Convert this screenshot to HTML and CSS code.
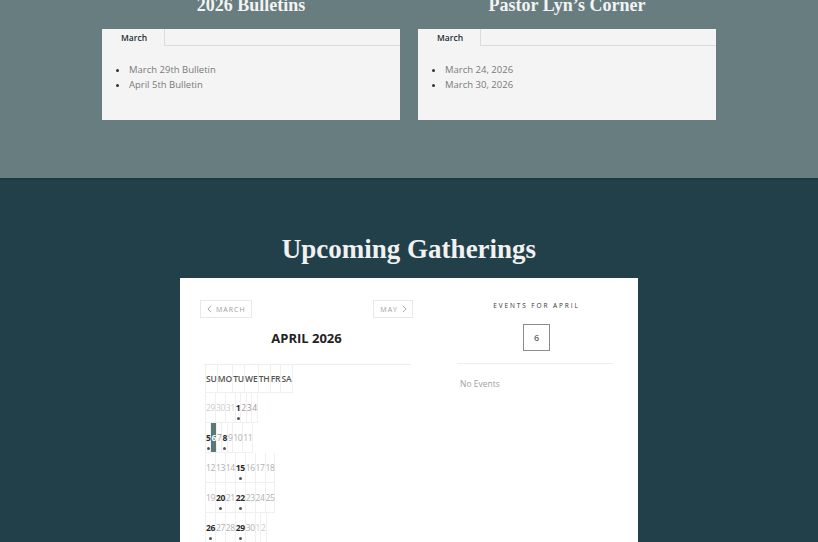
FILE: index.html
```html
<!DOCTYPE html>
<html lang="en">
<head>
<meta charset="utf-8">
<title>Bulletins &amp; Gatherings</title>
<link rel="stylesheet" href="styles.css">
</head>
<body>
  <section class="feeds">
    <div class="feed-grid">
      <div class="feed">
        <h2 class="feed-title">2026 Bulletins</h2>
        <div class="tabs-card">
          <div class="tab-bar">
            <span class="tab is-active">March</span>
            <span class="tab-fill"></span>
          </div>
          <ul class="feed-list">
            <li>March 29th Bulletin</li>
            <li>April 5th Bulletin</li>
          </ul>
        </div>
      </div>
      <div class="feed">
        <h2 class="feed-title">Pastor Lyn’s Corner</h2>
        <div class="tabs-card">
          <div class="tab-bar">
            <span class="tab is-active">March</span>
            <span class="tab-fill"></span>
          </div>
          <ul class="feed-list">
            <li>March 24, 2026</li>
            <li>March 30, 2026</li>
          </ul>
        </div>
      </div>
    </div>
  </section>

  <section class="gatherings">
    <h2 class="gatherings-title">Upcoming Gatherings</h2>
    <div class="calendar-card">
      <div class="month-col">
        <div class="month-nav">
          <button class="nav-btn" type="button">
            <svg class="chev" viewBox="0 0 6 10" width="5" height="8"><path d="M5 1 1 5l4 4" fill="none" stroke="#9a9a9a" stroke-width="1.1"/></svg>
            March
          </button>
          <button class="nav-btn" type="button">
            May
            <svg class="chev" viewBox="0 0 6 10" width="5" height="8"><path d="M1 1l4 4-4 4" fill="none" stroke="#9a9a9a" stroke-width="1.1"/></svg>
          </button>
        </div>
        <h3 class="month-title">APRIL 2026</h3>
        <div class="cal">
          <div class="cal-row cal-head">
            <span class="cell">SU</span><span class="cell">MO</span><span class="cell">TU</span><span class="cell">WE</span><span class="cell">TH</span><span class="cell">FR</span><span class="cell">SA</span>
          </div>
          <div class="cal-row">
            <span class="cell day other"><b>29</b></span>
            <span class="cell day other"><b>30</b></span>
            <span class="cell day other"><b>31</b></span>
            <span class="cell day event"><b>1</b><i class="dot"></i></span>
            <span class="cell day mid"><b>2</b></span>
            <span class="cell day mid"><b>3</b></span>
            <span class="cell day mid"><b>4</b></span>
          </div>
          <div class="cal-row">
            <span class="cell day event"><b>5</b><i class="dot"></i></span>
            <span class="cell day today"><b>6</b></span>
            <span class="cell day mid"><b>7</b></span>
            <span class="cell day event"><b>8</b><i class="dot"></i></span>
            <span class="cell day"><b>9</b></span>
            <span class="cell day"><b>10</b></span>
            <span class="cell day"><b>11</b></span>
          </div>
          <div class="cal-row">
            <span class="cell day"><b>12</b></span>
            <span class="cell day"><b>13</b></span>
            <span class="cell day"><b>14</b></span>
            <span class="cell day event"><b>15</b><i class="dot"></i></span>
            <span class="cell day"><b>16</b></span>
            <span class="cell day"><b>17</b></span>
            <span class="cell day"><b>18</b></span>
          </div>
          <div class="cal-row">
            <span class="cell day"><b>19</b></span>
            <span class="cell day event"><b>20</b><i class="dot"></i></span>
            <span class="cell day"><b>21</b></span>
            <span class="cell day event"><b>22</b><i class="dot"></i></span>
            <span class="cell day"><b>23</b></span>
            <span class="cell day"><b>24</b></span>
            <span class="cell day"><b>25</b></span>
          </div>
          <div class="cal-row">
            <span class="cell day event"><b>26</b><i class="dot"></i></span>
            <span class="cell day"><b>27</b></span>
            <span class="cell day"><b>28</b></span>
            <span class="cell day event"><b>29</b><i class="dot"></i></span>
            <span class="cell day"><b>30</b></span>
            <span class="cell day other"><b>1</b></span>
            <span class="cell day other"><b>2</b></span>
          </div>
        </div>
      </div>

      <aside class="events-col">
        <p class="events-label">EVENTS FOR APRIL</p>
        <div class="date-box">6</div>
        <hr class="events-rule">
        <p class="no-events">No Events</p>
      </aside>
    </div>
  </section>
</body>
</html>
```

FILE: styles.css
```css
* { box-sizing: border-box; }

body {
  margin: 0;
  font-family: "Open Sans", "Liberation Sans", sans-serif;
  background: #21404a;
  overflow: hidden;
}

/* ---- feeds band ---- */
.feeds {
  background: #687d7f;
  padding-bottom: 58px;
}

.feed-grid {
  display: grid;
  grid-template-columns: 298px 298px;
  column-gap: 18px;
  justify-content: center;
  margin-top: -6px;
}

.feed-title {
  margin: 0 0 13px;
  font-family: "Liberation Serif", "Times New Roman", serif;
  font-weight: 700;
  font-size: 18px;
  line-height: 22px;
  color: #f3f3f3;
  text-align: center;
}

.tabs-card {
  background: #f4f4f4;
  height: 91px;
}

.tab-bar {
  display: flex;
  height: 17px;
}

.tab {
  padding: 0 17px 0 19px;
  font-size: 8.5px;
  font-weight: 600;
  line-height: 17px;
  color: #1f2c33;
  border-right: 1px solid #dcdcdc;
}

.tab-fill {
  flex: 1;
  border-bottom: 1px solid #dcdcdc;
}

.feed-list {
  margin: 0;
  padding: 16px 0 0 27px;
  font-size: 9.5px;
  line-height: 15px;
  color: #7a7a7a;
}

.feed-list li::marker { color: #333; font-size: 9px; }

/* ---- gatherings band ---- */
.gatherings {
  border-top: 2px solid #1c3840;
  padding-top: 53px;
}

.gatherings-title {
  margin: 0 0 13px;
  font-family: "Liberation Serif", "Times New Roman", serif;
  font-weight: 700;
  font-size: 27px;
  line-height: 32px;
  color: #f1f1f1;
  text-align: center;
}

.calendar-card {
  width: 458px;
  margin: 0 auto;
  background: #fff;
  padding: 22px 20px 40px;
  display: grid;
  grid-template-columns: 213px 163px;
  column-gap: 42px;
}

.month-nav {
  display: flex;
  justify-content: space-between;
}

.nav-btn {
  display: flex;
  align-items: center;
  gap: 4px;
  height: 18px;
  padding: 0 5px 0 6px;
  background: #fff;
  border: 1px solid #e9e9e9;
  font-family: inherit;
  font-size: 7px;
  letter-spacing: 1px;
  text-transform: uppercase;
  color: #a0a0a0;
}

.month-title {
  margin: 10px 0 16px;
  font-size: 13px;
  font-weight: 700;
  line-height: 20px;
  color: #222;
  text-align: center;
}

.cal {
  margin: 0 3px 0 4px;
  border-top: 1px solid #ececec;
}

.cal-row {
  display: flex;
  padding-left: 1px;
}

.cell {
  border-right: 1px solid #f0f0f0;
  border-bottom: 1px solid #f0f0f0;
}

.cell:first-child { border-left: 1px solid #f0f0f0; }

.cal-head .cell {
  height: 28px;
  font-size: 8.5px;
  font-weight: 600;
  line-height: 28px;
  letter-spacing: -0.1px;
  color: #555;
}

.day {
  height: 30px;
  display: flex;
  flex-direction: column;
  align-items: center;
  padding-top: 10px;
}

.day b {
  font-size: 8.5px;
  font-weight: 500;
  line-height: 10px;
  letter-spacing: -0.4px;
  color: #b0b0b0;
}

.day.mid b { color: #9a9a9a; }
.day.other b { color: #cdcdcd; }
.day.event b { color: #2b2b2b; font-weight: 700; }

.day.today { background: #5b7777; }
.day.today b { color: #fff; font-weight: 700; }

.dot {
  width: 3px;
  height: 3px;
  margin-top: 4px;
  border-radius: 50%;
  background: #555;
}

/* ---- events side ---- */
.events-col {
  display: flex;
  flex-direction: column;
  align-items: center;
}

.events-label {
  margin: 0;
  font-size: 6.5px;
  letter-spacing: 1.9px;
  line-height: 12px;
  color: #333;
}

.date-box {
  width: 27px;
  height: 27px;
  margin-top: 12px;
  border: 1px solid #8c8c8c;
  display: flex;
  align-items: center;
  justify-content: center;
  font-size: 9px;
  font-weight: 600;
  color: #666;
}

.events-rule {
  align-self: stretch;
  margin: 12px 5px 0 2px;
  border: 0;
  border-top: 1px solid #ededed;
}

.no-events {
  align-self: stretch;
  margin: 14px 0 0;
  padding-left: 5px;
  font-size: 8.5px;
  line-height: 12px;
  color: #a0a0a0;
}
```
